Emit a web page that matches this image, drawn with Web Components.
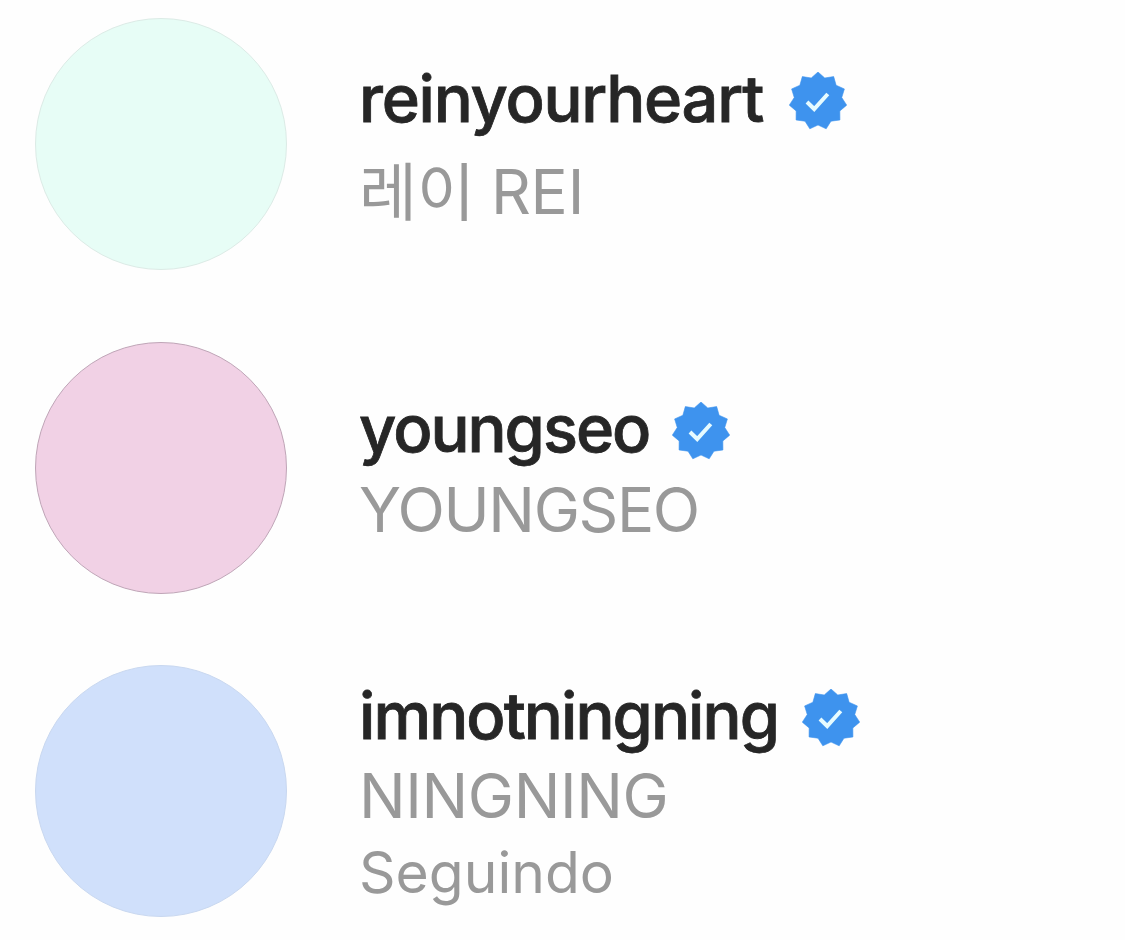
<!DOCTYPE html>
<html lang="pt">
<head>
<meta charset="utf-8">
<title>Accounts</title>
<style>
    body {
        margin: 0;
        background-color: #fefefe;
        font-family: Inter, "Noto Sans CJK KR", sans-serif;
    }
</style>
</head>
<body>

<account-list>
    <account-item style="--color: #e7fdf6; --edge: #dcebe6; --offset: 41px; --gap: 13px; --badge-gap: 26px; --name-spacing: -1.25px; --label-spacing: -0.2px">
        <span slot="name">reinyourheart</span>
        <verified-badge slot="badge"></verified-badge>
        <hangul-text slot="label">레이</hangul-text>
        <span slot="label">REI</span>
    </account-item>
    <account-item style="--color: #f1d1e5; --edge: #bfa5b7; --offset: 47px; --gap: 1px; --badge-gap: 23px; --name-spacing: -2px; --label-spacing: -1.4px">
        <span slot="name">youngseo</span>
        <verified-badge slot="badge"></verified-badge>
        <span slot="label">YOUNGSEO</span>
    </account-item>
    <account-item style="--color: #d0e0fb; --edge: #c9d8f0; --offset: 11px; --gap: 0px; --badge-gap: 24px; --name-spacing: -1.95px; --label-spacing: -0.4px">
        <span slot="name">imnotningning</span>
        <verified-badge slot="badge"></verified-badge>
        <span slot="label">NINGNING</span>
        <span slot="status">Seguindo</span>
    </account-item>
</account-list>

<script>
class AccountList extends HTMLElement {

    constructor() {
        super();
        this.shadowDOM = this.attachShadow({ mode: "open" });
    }

    connectedCallback() {
        this.shadowDOM.innerHTML = `
        <style>
            :host {
                display: flex;
                flex-direction: column;
                gap: 71.5px;
                box-sizing: border-box;
                height: 940px;
                padding: 18px 0 0 34.5px;
                overflow: hidden;
            }
        </style>
        <slot></slot>
        `;
    }
}

class AccountItem extends HTMLElement {

    constructor() {
        super();
        this.shadowDOM = this.attachShadow({ mode: "open" });
    }

    connectedCallback() {
        this.shadowDOM.innerHTML = `
        <style>
            :host {
                display: flex;
                flex: none;
                gap: 72.5px;
                height: 252px;
            }

            .avatar {
                flex: none;
                box-sizing: border-box;
                width: 252px;
                height: 252px;
                border: 1px solid var(--edge);
                border-radius: 50%;
                background-color: var(--color);
            }

            .info {
                padding-top: var(--offset);
                white-space: nowrap;
            }

            .name {
                display: flex;
                align-items: center;
                gap: var(--badge-gap);
                height: 80px;
                margin-bottom: var(--gap);
                font-size: 65px;
                font-weight: 500;
                line-height: 80px;
                letter-spacing: var(--name-spacing);
                color: #262626;
                -webkit-text-stroke: 0.8px #262626;
            }

            .label {
                display: flex;
                height: 80px;
                font-size: 62px;
                line-height: 80px;
                letter-spacing: var(--label-spacing);
                color: #999;
            }

            .status {
                font-size: 57px;
                line-height: 74px;
                color: #999;
            }
        </style>

        <div class="avatar"></div>
        <div class="info">
            <div class="name"><slot name="name"></slot><slot name="badge"></slot></div>
            <div class="label"><slot name="label"></slot></div>
            <div class="status"><slot name="status"></slot></div>
        </div>
        `;
    }
}

class HangulText extends HTMLElement {

    constructor() {
        super();
        this.shadowDOM = this.attachShadow({ mode: "open" });
    }

    connectedCallback() {
        this.shadowDOM.innerHTML = `
        <style>
            :host {
                display: block;
                margin: -4px 16px 0 0;
                font-family: "Noto Sans CJK KR", sans-serif;
                font-size: 63px;
                font-weight: 400;
                letter-spacing: 0;
            }
        </style>
        <slot></slot>
        `;
    }
}

class VerifiedBadge extends HTMLElement {

    constructor() {
        super();
        this.shadowDOM = this.attachShadow({ mode: "open" });
    }

    // star outline with 11 teeth, first one pointing up
    get points() {
        const points = [];
        for (let i = 0; i < 22; i++) {
            const radius = i % 2 ? 24 : 29;
            const angle = Math.PI * i / 11;
            points.push(`${(29 + radius * Math.sin(angle)).toFixed(2)},${(29 - radius * Math.cos(angle)).toFixed(2)}`);
        }
        return points.join(" ");
    }

    connectedCallback() {
        this.shadowDOM.innerHTML = `
        <style>
            :host {
                display: block;
                flex: none;
                width: 58px;
                height: 58px;
                margin-top: 4px;
            }

            svg {
                display: block;
            }
        </style>
        <svg width="58" height="58" viewBox="0 0 58 58">
            <polygon points="${this.points}" fill="#3e93ee" stroke="#3e93ee" stroke-width="0.6" stroke-linejoin="round"/>
            <path d="M18 30 L25.2 37 L38.8 22" fill="none" stroke="#e6fbff" stroke-width="4"/>
        </svg>
        `;
    }
}

customElements.define("account-list", AccountList);
customElements.define("account-item", AccountItem);
customElements.define("hangul-text", HangulText);
customElements.define("verified-badge", VerifiedBadge);
</script>
</body>
</html>
